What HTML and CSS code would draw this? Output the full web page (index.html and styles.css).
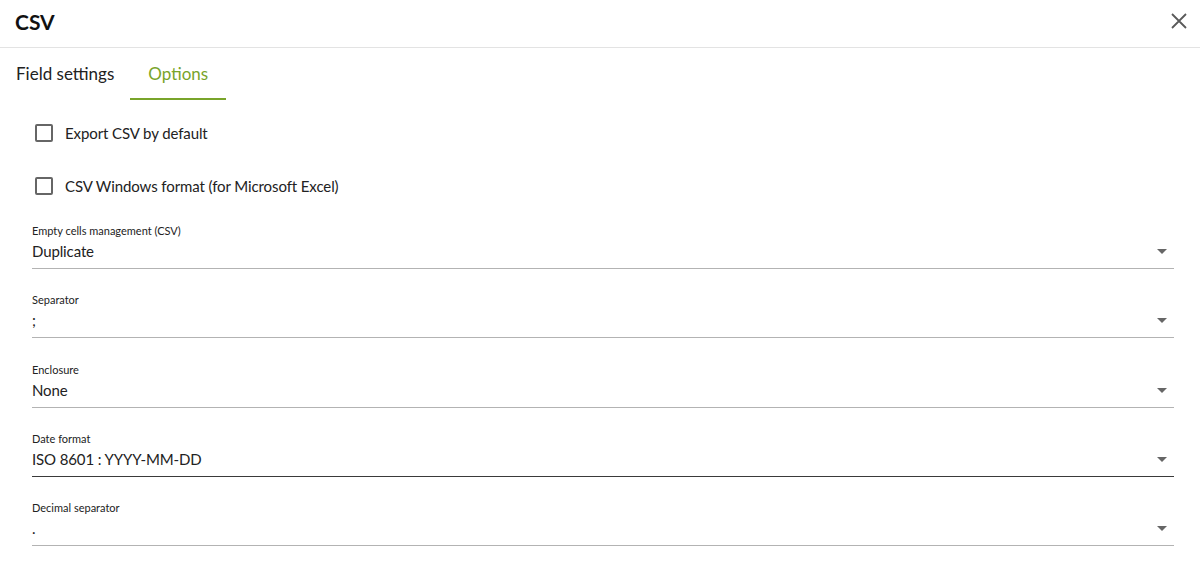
FILE: index.html
```html
<!DOCTYPE html>
<html>
<head>
<meta charset="utf-8">
<link rel="stylesheet" href="styles.css">
</head>
<body>
<div class="dialog">
  <header class="header">
    <h1 class="title">CSV</h1>
    <button class="close" aria-label="Close">
      <svg width="16" height="16" viewBox="0 0 16 16"><path d="M1 1 L15 15 M15 1 L1 15" stroke="#5a5a5a" stroke-width="1.8" fill="none"/></svg>
    </button>
  </header>
  <nav class="tabs">
    <div class="tab tab-first">Field settings</div>
    <div class="tab tab-active">Options</div>
  </nav>
  <main class="content">
    <div class="checks">
      <label class="check"><span class="box"></span><span class="check-label">Export CSV by default</span></label>
      <label class="check"><span class="box"></span><span class="check-label">CSV Windows format (for Microsoft Excel)</span></label>
    </div>
    <div class="fields">
      <div class="field">
        <div class="field-label">Empty cells management (CSV)</div>
        <div class="select"><span class="value">Duplicate</span><span class="arrow"></span></div>
      </div>
      <div class="field">
        <div class="field-label">Separator</div>
        <div class="select"><span class="value">;</span><span class="arrow"></span></div>
      </div>
      <div class="field">
        <div class="field-label">Enclosure</div>
        <div class="select"><span class="value">None</span><span class="arrow"></span></div>
      </div>
      <div class="field">
        <div class="field-label">Date format</div>
        <div class="select select-dark"><span class="value">ISO 8601 : YYYY-MM-DD</span><span class="arrow"></span></div>
      </div>
      <div class="field">
        <div class="field-label">Decimal separator</div>
        <div class="select"><span class="value">.</span><span class="arrow"></span></div>
      </div>
    </div>
  </main>
</div>
</body>
</html>
```

FILE: styles.css
```css
* { box-sizing: border-box; }
html, body { margin: 0; padding: 0; background: #fff; }
body { font-family: Lato, "Open Sans", sans-serif; color: #222; overflow: hidden; }

.header {
  height: 48px;
  display: flex;
  align-items: center;
  justify-content: space-between;
  padding: 0 13px 0 15px;
  border-bottom: 1px solid #e3e3e3;
}
.title { margin: 0; font-size: 21px; font-weight: 700; color: #111; line-height: 1; margin-top: -5px; }
.close { border: 0; background: none; padding: 0; width: 16px; height: 16px; display: flex; margin-top: -5px; cursor: pointer; }

.tabs { display: flex; height: 52px; }
.tab {
  display: flex; align-items: center;
  padding: 0 18px;
  font-size: 17px;
  color: #222;
  border-bottom: 2px solid transparent;
}
.tab-first { padding-left: 16px; padding-right: 16px; }
.tab-active { color: #79a42a; border-bottom-color: #79a42a; }

.content { padding: 12px 26px 0 32px; }
.checks { display: flex; flex-direction: column; gap: 11px; }
.check { height: 42px; display: flex; align-items: center; gap: 12px; padding-left: 3px; }
.box { width: 18px; height: 18px; border: 2px solid #666; border-radius: 2px; }
.check-label { font-size: 15px; letter-spacing: -0.1px; color: #222; }

.fields { padding-top: 15px; display: flex; flex-direction: column; gap: 22.25px; }
.field { display: flex; flex-direction: column; height: 47px; }
.field-label { font-size: 11px; line-height: 16px; color: #222; padding-top: 1px; height: 16px; }
.select {
  margin-top: 2px;
  height: 29px;
  display: flex;
  align-items: flex-start;
  justify-content: space-between;
  padding-right: 7px;
  border-bottom: 1px solid #b3b3b3;
}
.select-dark { border-bottom-color: #3a3a3a; }
.value { font-size: 15px; letter-spacing: -0.12px; line-height: 22px; color: #222; }
.arrow {
  margin-top: 9px;
  width: 0; height: 0;
  border-left: 5px solid transparent;
  border-right: 5px solid transparent;
  border-top: 5px solid #666;
}
```
